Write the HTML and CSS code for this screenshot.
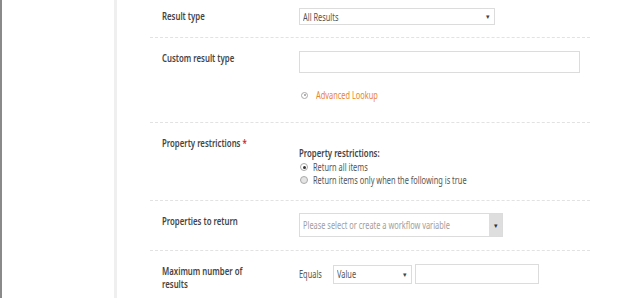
FILE: index.html
```html
<!DOCTYPE html>
<html>
<head>
<meta charset="utf-8">
<link rel="stylesheet" href="styles.css">
</head>
<body>
<div class="page">
  <div class="sidebar"></div>
  <div class="divider"></div>
  <div class="main">
    <div class="form">
      <div class="row row1">
        <div class="label"><span class="t">Result type</span></div>
        <div class="field">
          <div class="select sel-result"><span class="t val">All Results</span><span class="arrow">&#9662;</span></div>
        </div>
      </div>
      <div class="row row2">
        <div class="label"><span class="t">Custom result type</span></div>
        <div class="field">
          <div class="input inp-custom"></div>
          <div class="lookup"><span class="lk-icon"></span><span class="t lk-text">Advanced Lookup</span></div>
        </div>
      </div>
      <div class="row row3">
        <div class="label"><span class="t">Property restrictions <span class="req">*</span></span></div>
        <div class="field pr-field">
          <div class="pr-title"><span class="t">Property restrictions:</span></div>
          <div class="radio-line"><span class="radio checked"></span><span class="t">Return all items</span></div>
          <div class="radio-line"><span class="radio"></span><span class="t">Return items only when the following is true</span></div>
        </div>
      </div>
      <div class="row row4">
        <div class="label"><span class="t">Properties to return</span></div>
        <div class="field">
          <div class="select sel-props"><span class="ph"><span class="t">Please select or create a workflow variable</span></span><span class="btn">&#9662;</span></div>
        </div>
      </div>
      <div class="row row5">
        <div class="label"><span class="t">Maximum number of<br>results</span></div>
        <div class="field max-field">
          <span class="eq"><span class="t">Equals</span></span>
          <div class="select sel-value"><span class="t val">Value</span><span class="arrow">&#9662;</span></div>
          <div class="input inp-value"></div>
        </div>
      </div>
    </div>
  </div>
</div>
</body>
</html>
```
FILE: styles.css
```css
html, body {
  margin: 0;
  padding: 0;
  background: #fff;
}
body {
  font-family: "Noto Sans", "Open Sans", sans-serif;
  font-size: 10px;
  color: #555;
}
.t {
  display: inline-block;
  transform: scaleX(0.74);
  transform-origin: 0 50%;
  white-space: nowrap;
}
.page {
  display: flex;
  height: 298px;
  overflow: hidden;
}
.sidebar {
  width: 112px;
  border-left: 2px solid #8a8a8a;
  background: #fff;
}
.divider {
  width: 3px;
  background: #efefef;
}
.main {
  flex: 1;
  padding-left: 33px;
}
.form {
  width: 440px;
}
.row {
  display: flex;
  box-sizing: border-box;
  border-bottom: 1px dashed #e2e2e2;
}
.row5 { border-bottom: none; }
.label {
  width: 149px;
  flex: none;
  padding-left: 12px;
  box-sizing: border-box;
  font-weight: 600;
  font-size: 10px;
  color: #444;
  line-height: 13px;
}
.label .t, .pr-title .t { transform: scaleX(0.78); }
.field {
  flex: 1;
}
.row1 { height: 38px; padding-top: 8px; }
.row1 .label { padding-top: 2px; }
.row2 { height: 85px; padding-top: 13px; }
.row2 .label { padding-top: 1px; }
.row3 { height: 78px; padding-top: 14px; }
.row4 { height: 50px; padding-top: 12px; }
.row4 .label { padding-top: 2px; }
.row5 { padding-top: 13px; }
.row5 .label { padding-top: 1px; }

.select {
  box-sizing: border-box;
  border: 1px solid #dcdcdc;
  background: #fff;
  display: flex;
  align-items: center;
  color: #555;
  padding-left: 3px;
  white-space: nowrap;
}
.val { flex: 1; }
.arrow {
  font-size: 7px;
  color: #444;
  padding-right: 4px;
}
.sel-result { width: 196px; height: 17px; }
.input {
  box-sizing: border-box;
  border: 1px solid #dcdcdc;
  background: #fff;
}
.inp-custom { width: 281px; height: 22px; }
.lookup {
  margin-top: 15px;
  display: flex;
  align-items: center;
  padding-left: 2px;
}
.lk-icon {
  width: 5px;
  height: 5px;
  border: 1px solid #aaa;
  border-radius: 50%;
  position: relative;
  margin-right: 8px;
}
.lk-icon::after {
  content: "";
  position: absolute;
  left: 1.5px;
  top: 1.5px;
  width: 2px;
  height: 2px;
  border-radius: 50%;
  background: #999;
}
.lk-text { color: #e8842c; }
.req { color: #c82a2a; }

.pr-field { padding-top: 10px; }
.pr-title {
  font-weight: 600;
  font-size: 10px;
  color: #444;
  line-height: 13px;
  margin-bottom: 1px;
}
.radio-line {
  display: flex;
  align-items: center;
  line-height: 12.5px;
  color: #555;
}
.radio {
  width: 6px;
  height: 6px;
  border: 1px solid #aaa;
  border-radius: 50%;
  background: #e4e4e4;
  margin: 0 5px 0 1px;
  position: relative;
  flex: none;
}
.radio.checked { background: #fff; }
.radio.checked::after {
  content: "";
  position: absolute;
  left: 1.5px;
  top: 1.5px;
  width: 3px;
  height: 3px;
  border-radius: 50%;
  background: #333;
}
.sel-props {
  width: 204px;
  height: 24px;
  padding-right: 0;
}
.ph {
  flex: 1;
  min-width: 0;
  color: #a0a0a0;
}
.btn {
  flex: none;
  width: 13px;
  height: 22px;
  background: #dedede;
  font-size: 7px;
  color: #333;
  display: flex;
  align-items: center;
  justify-content: center;
}
.max-field {
  display: flex;
  align-items: center;
  align-self: flex-start;
}
.eq { color: #555; width: 34px; flex: none; }
.sel-value { width: 79px; height: 19px; margin-right: 3px; }
.inp-value { width: 124px; height: 20px; }
```
